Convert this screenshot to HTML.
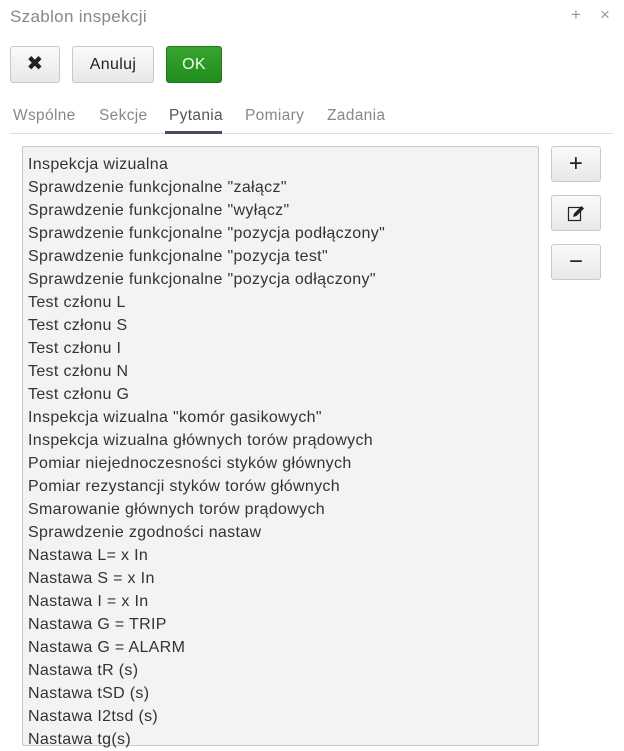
<!DOCTYPE html>
<html><head><meta charset="utf-8"><style>
body{margin:0;width:624px;height:741px;overflow:hidden;background:#fff;font-family:"Liberation Sans","DejaVu Sans",sans-serif;color:#333;position:relative;letter-spacing:0.33px}
.title{position:absolute;left:10px;top:7px;font-size:17px;color:#888}
.tc{position:absolute;top:5px;font-size:17px;color:#999}
.btn{position:absolute;box-sizing:border-box;border:1px solid #c8c8c8;border-radius:3px;background:linear-gradient(#fafafa,#e8e8e8);text-align:center;color:#222}
.ok{background:linear-gradient(#37a52f,#218c1c);border-color:#1f7a1a;color:#e8ffe8}
.tab{position:absolute;top:107px;font-size:15.5px;color:#888}
.list{position:absolute;left:22px;top:146px;width:517px;height:600px;box-sizing:border-box;border:1px solid #c9c9c9;border-radius:2px;background:#f3f3f3;padding:6px 0 0 5px;font-size:16px;line-height:23px;color:#333}
</style></head><body>
<div class="title">Szablon inspekcji</div>
<div class="tc" style="left:571px">+</div><div class="tc" style="left:600px">×</div>
<div class="btn" style="left:10px;top:46px;width:50px;height:37px;font-size:20px;font-weight:bold;line-height:35px">✖</div>
<div class="btn" style="left:72px;top:46px;width:82px;height:37px;font-size:16px;line-height:35px">Anuluj</div>
<div class="btn ok" style="left:166px;top:46px;width:56px;height:37px;font-size:16px;line-height:35px">OK</div>
<div class="tab" style="left:13px">Wspólne</div>
<div class="tab" style="left:99px">Sekcje</div>
<div class="tab" style="left:169px;color:#555">Pytania</div>
<div class="tab" style="left:245px">Pomiary</div>
<div class="tab" style="left:327px">Zadania</div>
<div style="position:absolute;left:10px;top:133px;width:603px;height:1px;background:#ddd"></div>
<div style="position:absolute;left:165px;top:131px;width:57px;height:3px;background:#4a4a63"></div>
<div class="list">
Inspekcja wizualna<br>Sprawdzenie funkcjonalne "załącz"<br>Sprawdzenie funkcjonalne "wyłącz"<br>Sprawdzenie funkcjonalne "pozycja podłączony"<br>Sprawdzenie funkcjonalne "pozycja test"<br>Sprawdzenie funkcjonalne "pozycja odłączony"<br>Test członu L<br>Test członu S<br>Test członu I<br>Test członu N<br>Test członu G<br>Inspekcja wizualna "komór gasikowych"<br>Inspekcja wizualna głównych torów prądowych<br>Pomiar niejednoczesności styków głównych<br>Pomiar rezystancji styków torów głównych<br>Smarowanie głównych torów prądowych<br>Sprawdzenie zgodności nastaw<br>Nastawa L= x In<br>Nastawa S = x In<br>Nastawa I = x In<br>Nastawa G = TRIP<br>Nastawa G = ALARM<br>Nastawa tR (s)<br>Nastawa tSD (s)<br>Nastawa I2tsd (s)<br>Nastawa tg(s)
</div>
<div class="btn" style="left:551px;top:146px;width:50px;height:36px;font-size:24px;line-height:33px">+</div>
<div class="btn" style="left:551px;top:195px;width:50px;height:36px">
<svg width="22" height="22" viewBox="0 0 22 22" style="margin-top:6px"><rect x="3.5" y="5.5" width="12" height="13" fill="none" stroke="#222" stroke-width="1.2"/><path d="M8 15 L9 11.5 L16.5 4 L19 6.5 L11.5 14 Z" fill="#222"/></svg></div>
<div class="btn" style="left:551px;top:244px;width:50px;height:36px;font-size:24px;line-height:33px">−</div>
</body></html>
